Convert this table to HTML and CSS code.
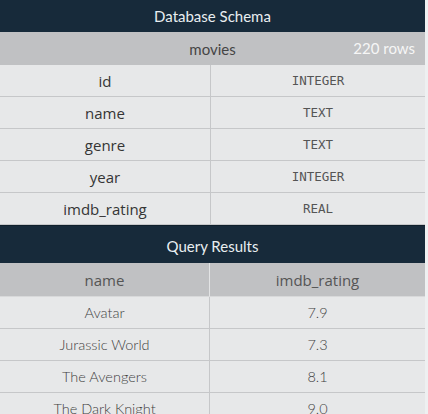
FILE: index.html
```
<!DOCTYPE html>
<html>
<head>
<meta charset="utf-8">
<link rel="stylesheet" href="styles.css">
</head>
<body>
<div class="page">
  <section class="panel">
    <div class="title">Database Schema</div>
    <div class="tablebar"><span class="tname">movies</span><span class="count">220 rows</span></div>
    <div class="grid schema">
      <div class="cell col">id</div><div class="cell type">INTEGER</div>
      <div class="cell col">name</div><div class="cell type">TEXT</div>
      <div class="cell col">genre</div><div class="cell type">TEXT</div>
      <div class="cell col">year</div><div class="cell type">INTEGER</div>
      <div class="cell col">imdb_rating</div><div class="cell type">REAL</div>
    </div>
  </section>
  <section class="panel">
    <div class="title results-title">Query Results</div>
    <div class="grid results">
      <div class="cell head">name</div><div class="cell head">imdb_rating</div>
      <div class="cell data">Avatar</div><div class="cell data">7.9</div>
      <div class="cell data">Jurassic World</div><div class="cell data">7.3</div>
      <div class="cell data">The Avengers</div><div class="cell data">8.1</div>
      <div class="cell data">The Dark Knight</div><div class="cell data">9.0</div>
    </div>
  </section>
</div>
</body>
</html>
```
FILE: styles.css
```
html, body {
  margin: 0;
  padding: 0;
  background: #eef0f1;
  overflow: hidden;
}
.page {
  width: 425px;
  background: #e7e8e9;
  font-family: "Open Sans", "Noto Sans", sans-serif;
}
.title {
  height: 32px;
  background: #172a3a;
  color: #e9eef1;
  font-family: Lato, sans-serif;
  font-size: 15px;
  display: flex;
  align-items: center;
  justify-content: center;
}
.results-title {
  height: 38px;
  border-top: 1px solid #0f1f2b;
  box-sizing: border-box;
  padding-top: 2px;
}
.tablebar {
  height: 33px;
  background: #c0c1c3;
  display: flex;
  align-items: center;
  justify-content: center;
  position: relative;
}
.tname {
  font-family: Lato, sans-serif;
  font-size: 15px;
  color: #454545;
}
.count {
  position: absolute;
  right: 10px;
  top: 0;
  line-height: 33px;
  font-family: Lato, sans-serif;
  font-size: 15px;
  color: #f6f6f6;
}
.grid {
  display: grid;
  grid-template-columns: 211px 1fr;
}
.results {
  grid-template-columns: 210px 1fr;
}
.cell {
  height: 32px;
  box-sizing: border-box;
  border-bottom: 1px solid #c6c7c9;
  display: flex;
  align-items: center;
  justify-content: center;
}
.grid .cell:nth-child(odd) {
  border-right: 1px solid #c6c7c9;
}
.col {
  font-size: 15px;
  color: #353535;
}
.type {
  font-family: "DejaVu Sans Mono", monospace;
  font-size: 12.5px;
  color: #555;
}
.head {
  height: 34px;
  background: #c0c1c3;
  font-size: 15px;
  color: #555;
  border-bottom: 1px solid #d8d9da;
}
.results .head:nth-child(odd) {
  border-right: 1px solid #e3e4e5;
}
.data {
  font-family: Lato, sans-serif;
  font-weight: 300;
  font-size: 14.5px;
  color: #3f3f3f;
}
```
